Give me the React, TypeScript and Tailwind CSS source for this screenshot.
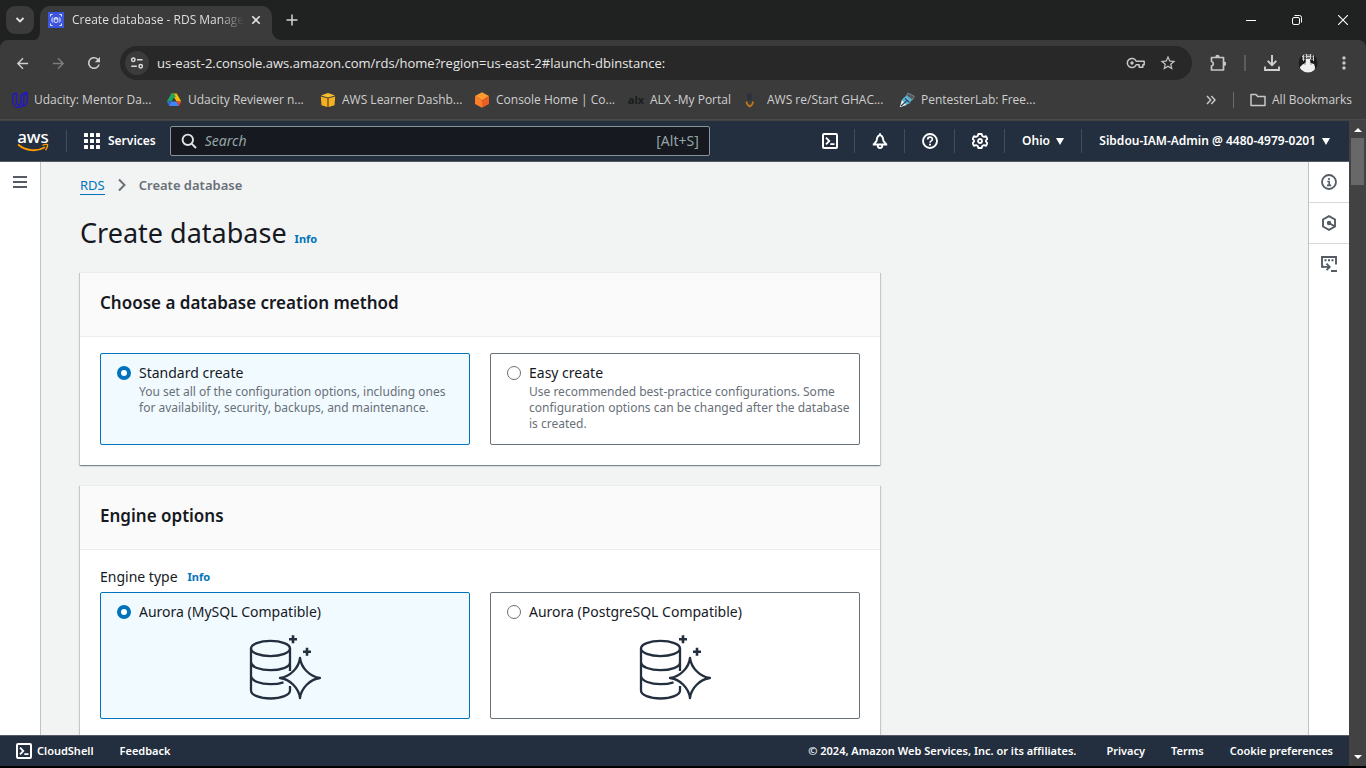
import React from "react";
import { MdArrowBack, MdArrowForward, MdRefresh, MdStarBorder, MdMoreVert } from "react-icons/md";

type IconProps = { className?: string };

function RdsFavicon() {
  return (
    <svg viewBox="0 0 16 16" className="size-4 shrink-0">
      <rect width="16" height="16" fill="#3b55dc" />
      <g fill="none" stroke="#fff" strokeWidth=".9">
        <ellipse cx="8" cy="6.300" rx="1.800" ry="0.7" />
        <path d="M6.200 6.300v3.400c0 .5.8.8 1.800.8s1.800-.3 1.800-.8V6.300M4.600 5.500C3.700 6.500 3.700 9.500 4.600 10.500M11.400 5.500C12.300 6.500 12.300 9.500 11.400 10.500" />
        <path d="M4.500 2.500h-2v2M11.500 2.500h2v2M4.500 13.500h-2v-2M11.500 13.500h2v-2" />
      </g>
    </svg>
  );
}

function TuneIcon() {
  return (
    <svg viewBox="0 0 16 16" className="size-4" fill="none" stroke="#dcdcdc" strokeWidth="1.500">
      <circle cx="4.300" cy="4.700" r="1.700" />
      <path d="M8 4.700h5.500M2.300 11.300h5.500" />
      <circle cx="11.700" cy="11.300" r="1.700" />
    </svg>
  );
}

function KeyIcon() {
  return (
    <svg viewBox="0 0 20 14" className="h-[14px] w-5" fill="none" stroke="#c7c7c7" strokeWidth="1.500">
      <path d="M10.200 5.300h8v3.400h-1.400v2.500h-3.600V8.700h-3A4.600 4.600 0 1 1 10.200 5.300z" strokeLinejoin="round" />
      <circle cx="6" cy="7" r="1.700" fill="#c7c7c7" stroke="none" />
    </svg>
  );
}

function PuzzleIcon() {
  return (
    <svg viewBox="0 0 18 18" className="size-[18px]">
      <path
        d="M2.500 3.500h12v12.500h-12v-4a2.300 2.300 0 0 0 0-4.500z"
        fill="none" stroke="#c7c7c7" strokeWidth="1.700" strokeLinejoin="round"
      />
      <path d="M6.300 3a2.200 2.200 0 0 1 4.400 0zM15 7.500a2.200 2.200 0 0 1 0 4.400z" fill="#c7c7c7" />
    </svg>
  );
}

function DownloadIcon() {
  return (
    <svg viewBox="0 0 18 18" className="size-[18px]" fill="none" stroke="#d0d0d0" strokeWidth="1.900">
      <path d="M9 1v10M4.700 6.900L9 11.200l4.300-4.300M2 12.500V16h14v-3.500" />
    </svg>
  );
}

function Avatar() {
  return (
    <svg viewBox="0 0 20 20" className="size-5">
      <clipPath id="avatar-clip"><circle cx="10" cy="10" r="9.500" /></clipPath>
      <g clipPath="url(#avatar-clip)">
        <rect width="20" height="20" fill="#1d1d1d" />
        <rect x="4" y="1" width="12" height="6" fill="#6f6f6f" />
        <path d="M5 1h1v7H5zM8 0h1v5H8zM12 1h1v5h-1zM15 2h1v6h-1zM4 3h12v1H4z" fill="#d0d0d0" />
        <path d="M6.500 2h1v4h-1zM13.500 2h1v4h-1z" fill="#151515" />
        <path d="M2 20v-6l2.500-2.500 3-1.500.5-4h4l.5 4 3.500 1 1 3-.5 6z" fill="#efefef" />
        <path d="M7 10v2M13 10v2" stroke="#999" fill="none" />
      </g>
    </svg>
  );
}

function UdacityIcon() {
  return (
    <svg viewBox="0 0 16 16" className="size-4 shrink-0" fill="none" stroke="#2117c9" strokeWidth="1.400" strokeLinejoin="round">
      <path d="M4.500.800L.800 2.700v6.500C.800 13 3.500 15.200 6.700 15.200s5-1.500 5-5V3L15.200 1v7.500c0 3-1.500 4.700-4 5.700" />
      <path d="M4.500.800v8.500c0 2 1 3.200 2.700 3.800M9 3v7.500c0 1.500-.8 2.200-1.800 2.600M9 3l3.500-2.200 2.700.2" />
    </svg>
  );
}

function DriveIcon() {
  return (
    <svg viewBox="0 0 16 16" className="size-4 shrink-0">
      <path d="M5.300 1.500h5.400L15.300 9.500H10.600L8 5.200z" fill="#fbbc04" />
      <path d="M5.300 1.500h2.700L10 5.200 8 5.200l-2.600 4.300H.8z" fill="#1fa463" />
      <path d="M.8 9.500h4.600L3.200 14z" fill="#2f6bd6" />
      <path d="M5.400 9.500h5.200L12.900 14H3.200z" fill="#4285f4" />
      <path d="M10.600 9.500h4.700L12.900 14z" fill="#ea4335" />
    </svg>
  );
}

function YellowBoxIcon() {
  return (
    <svg viewBox="0 0 16 16" className="size-4 shrink-0">
      <path d="M1 3.500L8 1l7 2.500L8 5.500z" fill="#fcbf2d" />
      <path d="M.8 4.500L7.200 6.300V15L1.500 13.200z" fill="#f5b021" />
      <path d="M15.200 4.500L8.800 6.300V15l5.700-1.800z" fill="#f5b021" />
      <path d="M7.200 6.300h1.600V15H7.200z" fill="#a87412" />
    </svg>
  );
}

function ConsoleBoxIcon() {
  return (
    <svg viewBox="0 0 16 16" className="size-4 shrink-0">
      <path d="M8 .3l7 3.700L8 8.500 1 4z" fill="#ff9a2e" />
      <path d="M1 4l7 4.500v7.200L1 12z" fill="#fb7f2a" />
      <path d="M15 4L8 8.500v7.200l7-3.700z" fill="#ee5d21" />
    </svg>
  );
}

function AlxIcon() {
  return <span className="flex h-4 w-4 shrink-0 items-center justify-center text-[11px] leading-4 font-bold text-[#171c1e]">alx</span>;
}

function RestartIcon() {
  return (
    <svg viewBox="0 0 16 16" className="size-4 shrink-0">
      <path d="M2 1l2 1.500L6.500 1v6L4.500 9 2 7z" fill="#2b303a" />
      <path d="M8 4l7-1-3 3.500H8z" fill="#343840" />
      <path d="M1.500 9.500C1.500 12 3 13.500 4.800 14.500 6.600 13.500 8 12 8 9.500" fill="none" stroke="#c07a17" strokeWidth="1.700" />
    </svg>
  );
}

function PentesterIcon() {
  return (
    <svg viewBox="0 0 16 16" className="size-4 shrink-0">
      <path d="M8 3l5.500 4-3 4.500-9 3.500L3.500 7z" fill="#5ab6dd" />
      <path d="M9 1l6.300 3.300-2 3.700L7.500 3.500z" fill="#4b5961" stroke="#8a969c" strokeWidth=".8" />
      <path d="M.8 15.200L2.800 8l4.700 5z" fill="#e8eef0" />
      <path d="M6 6.500l4.500 4M2 14l5.500-5" stroke="#2d3f4a" strokeWidth="1.100" />
    </svg>
  );
}

function SearchIcon() {
  return (
    <svg viewBox="0 0 16 16" className="size-4 shrink-0" fill="none" stroke="#e2e5e5" strokeWidth="1.900">
      <circle cx="6.800" cy="6.800" r="5.200" />
      <path d="M10.600 10.600l4.400 4.400" />
    </svg>
  );
}

function ShellIcon() {
  return (
    <svg viewBox="0 0 16 16" className="size-4 shrink-0" fill="none" stroke="#fff" strokeWidth="2">
      <rect x="1" y="1" width="14" height="14" rx="1" />
      <path d="M4 4.600L7.300 8 4 11.400M8.300 11.200H12.500" strokeWidth="1.800" />
    </svg>
  );
}

function BellIcon() {
  return (
    <svg viewBox="0 0 16 16" className="size-4" fill="none" stroke="#fff" strokeWidth="1.900" strokeLinejoin="round">
      <path d="M.8 11.500h14.400M1.800 11.300L4.600 7.800C5 4.500 5.500 2.300 8 2.300s3 2.200 3.400 5.500l2.800 3.500" />
      <path d="M8 .3v2" />
      <path d="M5.800 12v.8a2.200 2.200 0 0 0 4.400 0V12" />
    </svg>
  );
}

function HelpIcon() {
  return (
    <svg viewBox="0 0 16 16" className="size-4" fill="none" stroke="#fff" strokeWidth="1.900">
      <circle cx="8" cy="8" r="7" />
      <path d="M5.700 6.500C5.700 3.300 10.400 3.400 10.400 6.200 10.400 8 8 7.800 8 9.700" strokeWidth="1.700" />
      <path d="M8 10.700v1.900" />
    </svg>
  );
}

function GearIcon() {
  return (
    <svg viewBox="0 0 16 16" className="size-4" fill="none" stroke="#fff" strokeWidth="1.800" strokeLinejoin="round">
      <path d="M6.300 1h3.400l.5 2 1.800.9 2-.7 1.400 2.700L14 7.300v1.400l1.400 1.400-1.400 2.700-2-.7-1.800.9-.5 2H6.300l-.5-2L4 12.100l-2 .7L.6 10.100 2 8.700V7.300L.6 5.900 2 3.200l2 .7L5.800 3z" />
      <circle cx="8" cy="8" r="2" />
    </svg>
  );
}

function InfoIcon() {
  return (
    <svg viewBox="0 0 16 16" className="size-4" fill="none" stroke="#545b64" strokeWidth="1.800">
      <circle cx="8" cy="8" r="7" />
      <path d="M8 4v2M6.300 7.500H8.200V12M6 11.400h4.200" strokeWidth="1.600" />
    </svg>
  );
}

function HexIcon() {
  return (
    <svg viewBox="0 0 16 16" className="size-4" fill="none" stroke="#545b64" strokeWidth="1.900">
      <path d="M8 1.100l6 3.400v7l-6 3.400-6-3.400v-7z" />
      <circle cx="8" cy="8" r="2.200" fill="#545b64" stroke="none" />
      <path d="M8 8l5.500 3.200" />
    </svg>
  );
}

function TerminalIcon() {
  return (
    <svg viewBox="0 0 16 16" className="size-4" fill="none" stroke="#545b64" strokeWidth="1.900">
      <path d="M3 10.800H1V1h14v7.500M10 15h6" />
      <path d="M3.500 4.200h2M7 4.200h2M10.500 4.200h2" strokeWidth="2" />
      <path d="M1.500 10.900h6.500M5.500 7.600l3.200 3.300-3.200 3.300" />
    </svg>
  );
}

function DatabaseStarIcon({ className }: IconProps) {
  return (
    <svg viewBox="0 0 72 65" className={className} fill="none" stroke="#232f3e" strokeWidth="2.300" strokeLinejoin="round">
      <ellipse cx="21.500" cy="13.500" rx="19.500" ry="7.600" />
      <path d="M2 13.500V55.500C2 60 10.500 63.500 21.500 63.500S41 60 41 55.500V51M41 13.500V36" />
      <path d="M2 27.500C2.500 32 11 35.200 21.500 35.200S40.500 32 41 28" />
      <path d="M2 41.500C3 46 11 49.200 21.500 49.200C26 49.200 31 48.500 34.500 47.300" />
      <path d="M51 23C52.200 33 61 41.800 71 43C61 44.200 52.200 53 51 63C49.800 53 41 44.200 31 43C41 41.800 49.800 33 51 23Z" />
      <path d="M44 .2v8M40 4.200h8M58 12.800v8M54 16.800h8" strokeWidth="2.600" />
    </svg>
  );
}

function CaretDown() {
  return (
    <svg viewBox="0 0 8 7" className="h-[7px] w-2 shrink-0">
      <path d="M0 0h8L4 7z" fill="#fff" />
    </svg>
  );
}

const bookmarks: { label: string; icon: React.ReactNode; width: string }[] = [
  { label: "Udacity: Mentor Da...", icon: <UdacityIcon />, width: "w-[154px]" },
  { label: "Udacity Reviewer n...", icon: <DriveIcon />, width: "w-[154px]" },
  { label: "AWS Learner Dashb...", icon: <YellowBoxIcon />, width: "w-[154px]" },
  { label: "Console Home | Co...", icon: <ConsoleBoxIcon />, width: "w-[154px]" },
  { label: "ALX -My Portal", icon: <AlxIcon />, width: "w-[117px]" },
  { label: "AWS re/Start GHAC...", icon: <RestartIcon />, width: "w-[154px]" },
  { label: "PentesterLab: Free...", icon: <PentesterIcon />, width: "w-[154px]" },
];

function TabStrip() {
  return (
    <div className="flex h-10 items-end bg-[#1f2221] text-[#dedede]">
      <button aria-label="Search tabs" className="mb-1.5 ml-1.5 flex size-7 items-center justify-center rounded-[9px] bg-[#3b3b3b]">
        <svg viewBox="0 0 10 10" className="size-[10px]" fill="none" stroke="#e3e3e3" strokeWidth="1.800"><path d="M1.500 3L5 6.500 8.500 3" /></svg>
      </button>
      <svg viewBox="0 0 6 10" className="h-[10px] w-1.5"><path d="M6 0V10H0C4 10 6 6 6 0z" fill="#3b3b3b" /></svg>
      <div className="flex h-[34px] w-[232px] items-center rounded-t-[10px] bg-[#3b3b3b] px-2 pb-1.5">
        <RdsFavicon />
        <span className="ml-2 flex-1 overflow-hidden mask-r-from-85% mask-r-to-100% text-xs leading-4 whitespace-nowrap">Create database - RDS Manage</span>
        <button aria-label="Close tab" className="ml-1 flex size-4 items-center justify-center">
          <svg viewBox="0 0 10 10" className="size-[10px]" stroke="#e3e3e3" strokeWidth="1.600"><path d="M1.300 1.300l7.400 7.400M8.700 1.300L1.300 8.700" /></svg>
        </button>
      </div>
      <svg viewBox="0 0 10 10" className="size-[10px]"><path d="M0 0V10H10C4 10 0 6 0 0z" fill="#3b3b3b" /></svg>
      <button aria-label="New tab" className="mb-1.5 flex h-7 w-5 items-center justify-center">
        <svg viewBox="0 0 12 12" className="size-3" stroke="#d5d5d5" strokeWidth="1.500"><path d="M6 .5v11M.5 6h11" /></svg>
      </button>
      <div className="ml-auto flex h-10">
        <button aria-label="Minimize" className="flex w-[46px] items-center justify-center">
          <svg viewBox="0 0 10 10" className="size-[10px]" stroke="#fff"><path d="M0 5.500h10" /></svg>
        </button>
        <button aria-label="Restore" className="flex w-[46px] items-center justify-center">
          <svg viewBox="0 0 10 10" className="size-[10px]" fill="none" stroke="#fff"><rect x=".5" y="2.500" width="7" height="7" rx="1.500" /><path d="M2.500.5h5a2 2 0 0 1 2 2v5" /></svg>
        </button>
        <button aria-label="Close" className="flex w-[46px] items-center justify-center">
          <svg viewBox="0 0 10 10" className="size-[10px]" stroke="#fff" strokeWidth="1.100"><path d="M0 0l10 10M10 0L0 10" /></svg>
        </button>
      </div>
    </div>
  );
}

function Toolbar() {
  return (
    <div className="bg-[#1f2221]">
      <div className="rounded-t-lg bg-[#3b3b3b]">
        <div className="flex h-[46px] items-center px-1">
          <button aria-label="Back" className="flex w-9 justify-center text-[#d0d0d0]"><MdArrowBack size={17} /></button>
          <button aria-label="Forward" className="flex w-9 justify-center text-[#7d7d7d]"><MdArrowForward size={17} /></button>
          <button aria-label="Reload" className="flex w-9 justify-center text-[#d0d0d0]"><MdRefresh size={18} /></button>
          <div className="ml-2 flex h-[34px] flex-1 items-center rounded-full bg-[#282828] pr-[15px] pl-[5px]">
            <button aria-label="Site information" className="flex size-6 items-center justify-center rounded-full bg-[#3b3b3b]"><TuneIcon /></button>
            <input
              aria-label="Address"
              defaultValue="us-east-2.console.aws.amazon.com/rds/home?region=us-east-2#launch-dbinstance:"
              className="ml-2 min-w-0 flex-1 bg-transparent text-[13px] leading-5 text-[#e6e6e6] outline-none"
            />
            <button aria-label="Passwords" className="mr-[13px]"><KeyIcon /></button>
            <button aria-label="Bookmark this page" className="text-[#c7c7c7]"><MdStarBorder size={18} /></button>
          </div>
          <button aria-label="Extensions" className="ml-2 flex w-9 justify-center"><PuzzleIcon /></button>
          <span className="mx-2 h-4 w-0.5 bg-[#5c5c5c]" />
          <button aria-label="Downloads" className="flex w-9 justify-center"><DownloadIcon /></button>
          <button aria-label="Profile" className="flex w-9 justify-center"><Avatar /></button>
          <button aria-label="Menu" className="flex w-9 justify-center text-[#c7c7c7]"><MdMoreVert size={20} /></button>
        </div>
        <nav aria-label="Bookmarks" className="flex h-[34px] items-start border-b border-[#4a4a48] pt-1.5 pr-[14px] pl-3 text-xs leading-4 text-[#cfcfcf]">
          {bookmarks.map((b) => (
            <a key={b.label} href="#" className={`flex shrink-0 items-center gap-1.5 whitespace-nowrap ${b.width}`}>
              {b.icon}
              <span>{b.label}</span>
            </a>
          ))}
          <button aria-label="More bookmarks" className="ml-auto flex h-4 items-center">
            <svg viewBox="0 0 10 10" className="size-[10px]" fill="none" stroke="#c7c7c7" strokeWidth="1.500"><path d="M1 1l3.700 4L1 9M5.300 1L9 5 5.300 9" /></svg>
          </button>
          <span className="mr-4 ml-[17px] h-4 w-px bg-[#6a6a6a]" />
          <a href="#" className="flex items-center gap-1.5">
            <svg viewBox="0 0 16 14" className="h-[14px] w-4" fill="none" stroke="#c7c7c7" strokeWidth="1.500" strokeLinejoin="round"><path d="M1 1.500h5l1.700 2H15v9H1z" /></svg>
            All Bookmarks
          </a>
        </nav>
      </div>
    </div>
  );
}

function AwsHeader() {
  return (
    <header className="flex h-[41px] items-center border-b border-[#545b64] bg-[#232f3e] text-xs leading-4 font-semibold text-white">
      <a href="#" aria-label="AWS home" className="ml-4 flex w-[34px] flex-col items-center">
        <span className="text-[17px] leading-[13px] font-medium">aws</span>
        <svg viewBox="0 0 32 9" className="h-[9px] w-8" fill="none" stroke="#ff9900">
          <path d="M1 1.500C9 8.200 20 8.800 28 4.200" strokeWidth="1.900" />
          <path d="M25.500 2.300C28 1.300 31 1 30.600 2.200 30.400 4 30 5.500 28.500 7.300" strokeWidth="1.400" />
        </svg>
      </a>
      <span className="ml-4 h-[22px] w-px bg-[#414d5c]" />
      <button className="ml-[17px] flex items-center gap-2">
        <svg viewBox="0 0 16 16" className="size-4" fill="#fff">
          {[0, 6, 12].map((y) => [0, 6, 12].map((x) => <rect key={`${x}-${y}`} x={x} y={y} width="4" height="4" rx=".5" />))}
        </svg>
        Services
      </button>
      <label className="ml-[14px] flex h-[30px] w-[540px] items-center rounded-xs border border-[#879596] bg-[#16191f] px-[10px]">
        <SearchIcon />
        <input type="search" aria-label="Search" placeholder="Search" className="ml-2 min-w-0 flex-1 bg-transparent text-sm leading-5 font-normal italic outline-none placeholder:text-[#95a5a6]" />
        <span className="text-sm font-normal text-[#95a5a6]">[Alt+S]</span>
      </label>
      <div className="ml-auto flex items-center">
        <button aria-label="CloudShell" className="flex h-6 w-[50px] items-center justify-center border-r border-[#414d5c]"><ShellIcon /></button>
        <button aria-label="Notifications" className="flex h-6 w-[50px] items-center justify-center border-r border-[#414d5c]"><BellIcon /></button>
        <button aria-label="Help" className="flex h-6 w-[50px] items-center justify-center border-r border-[#414d5c]"><HelpIcon /></button>
        <button aria-label="Settings" className="flex h-6 w-[50px] items-center justify-center border-r border-[#414d5c]"><GearIcon /></button>
        <button className="flex h-6 w-[77px] items-center justify-center gap-1.5 border-r border-[#414d5c]">Ohio <CaretDown /></button>
        <button className="flex h-6 w-[267px] items-center justify-end gap-1.5 pr-[19px] whitespace-nowrap">Sibdou-IAM-Admin @ 4480-4979-0201 <CaretDown /></button>
      </div>
    </header>
  );
}

type TileProps = { name: string; id: string; label: string; checked?: boolean; description?: string; children?: React.ReactNode };

function Tile({ name, id, label, checked, description, children }: TileProps) {
  return (
    <label
      htmlFor={id}
      className="flex flex-col rounded-xs border border-[#687078] bg-white pt-2 pr-2 pb-3 pl-4 has-checked:border-[#0073bb] has-checked:bg-[#f1faff]"
    >
      <span className="flex items-center gap-2 text-sm leading-[22px] text-[#16191f]">
        <input
          type="radio" id={id} name={name} defaultChecked={checked}
          className="size-[14px] shrink-0 appearance-none rounded-full border border-[#687078] bg-white checked:border-4 checked:border-[#0073bb]"
        />
        {label}
      </span>
      {description && <span className="pl-[22px] text-xs leading-4 text-[#687078]">{description}</span>}
      {children && <span className="flex justify-center pt-3 pr-2 pb-1.5">{children}</span>}
    </label>
  );
}

function Panel({ title, children }: { title: string; children: React.ReactNode }) {
  return (
    <section className="border-t border-[#eaeded] bg-white shadow-[0_1px_1px_0_rgba(0,28,36,0.3),1px_1px_1px_0_rgba(0,28,36,0.15),-1px_1px_1px_0_rgba(0,28,36,0.15)]">
      <h2 className="border-b border-[#eaeded] bg-[#fafafa] px-5 pt-[19px] pb-[22px] text-[17px] leading-[22px] font-semibold text-[#16191f]">{title}</h2>
      <div className="px-5 pt-4 pb-5">{children}</div>
    </section>
  );
}

function MainContent() {
  return (
    <main className="min-w-0 flex-1 overflow-hidden bg-[#f2f3f3] pl-[39px] text-[#16191f]">
      <nav aria-label="Breadcrumb" className="flex items-center pt-3 text-[13px] leading-[22px]">
        <a href="#" className="border-b border-[#0073bb] leading-[18px] text-[#0073bb]">RDS</a>
        <svg viewBox="0 0 8 14" className="mx-[13px] h-[14px] w-2" fill="none" stroke="#687078" strokeWidth="2"><path d="M1 1.500L6.500 7 1 12.500" /></svg>
        <span className="font-semibold text-[#687078]">Create database</span>
      </nav>
      <div className="mt-[19px] flex items-baseline gap-2">
        <h1 className="text-[27px] leading-9">Create database</h1>
        <a href="#" className="text-[11px] font-bold text-[#0073bb]">Info</a>
      </div>
      <div className="mt-[21px] flex max-w-[800px] flex-col gap-5">
        <Panel title="Choose a database creation method">
          <div className="grid grid-cols-2 gap-5">
            <Tile name="method" id="standard" label="Standard create" checked description="You set all of the configuration options, including ones for availability, security, backups, and maintenance." />
            <Tile name="method" id="easy" label="Easy create" description="Use recommended best-practice configurations. Some configuration options can be changed after the database is created." />
          </div>
        </Panel>
        <Panel title="Engine options">
          <div className="mb-1 flex items-center gap-[10px] text-sm leading-[22px]">
            Engine type
            <a href="#" className="text-[11px] font-bold text-[#0073bb]">Info</a>
          </div>
          <div className="grid grid-cols-2 gap-5">
            <Tile name="engine" id="aurora-mysql" label="Aurora (MySQL Compatible)" checked>
              <DatabaseStarIcon className="h-[65px] w-[72px]" />
            </Tile>
            <Tile name="engine" id="aurora-postgres" label="Aurora (PostgreSQL Compatible)">
              <DatabaseStarIcon className="h-[65px] w-[72px]" />
            </Tile>
          </div>
        </Panel>
      </div>
    </main>
  );
}

function PageFooter() {
  return (
    <footer className="flex h-[31px] shrink-0 items-center border-t border-[#545b64] bg-[#232f3e] px-4 text-[11px] leading-4 font-semibold text-white">
      <button className="flex items-center gap-[5px]"><ShellIcon /> CloudShell</button>
      <a href="#" className="ml-[26px]">Feedback</a>
      <span className="ml-auto">© 2024, Amazon Web Services, Inc. or its affiliates.</span>
      <a href="#" className="ml-[30px]">Privacy</a>
      <a href="#" className="ml-[26px]">Terms</a>
      <a href="#" className="ml-[26px]">Cookie preferences</a>
    </footer>
  );
}

export default function App() {
  return (
    <div className="flex h-screen flex-col overflow-hidden border-b-2 border-black bg-white font-['Noto_Sans',sans-serif]">
      <div className="shrink-0 font-['Open_Sans','Noto_Sans',sans-serif]">
        <TabStrip />
        <Toolbar />
      </div>
      <div className="flex min-h-0 flex-1 bg-[#424242] pt-px">
        <div className="flex min-w-0 flex-1 flex-col">
          <AwsHeader />
          <div className="flex min-h-0 flex-1">
            <aside className="w-[41px] shrink-0 border-r border-[#bcc4c4] bg-white">
              <button aria-label="Open navigation" className="flex h-10 w-10 items-center justify-center">
                <svg viewBox="0 0 14 12" className="h-3 w-[14px]" stroke="#545b64" strokeWidth="2"><path d="M0 1h14M0 6h14M0 11h14" /></svg>
              </button>
            </aside>
            <MainContent />
            <aside className="w-[41px] shrink-0 border-l border-[#bcc4c4] bg-white">
              <button aria-label="Info panel" className="flex h-[41px] w-10 items-center justify-center border-b border-[#d5dbdb]"><InfoIcon /></button>
              <button aria-label="Diagnostics" className="flex h-[41px] w-10 items-center justify-center border-b border-[#d5dbdb]"><HexIcon /></button>
              <button aria-label="Tutorials" className="flex h-10 w-10 items-center justify-center"><TerminalIcon /></button>
            </aside>
          </div>
          <PageFooter />
        </div>
        <div className="flex w-[17px] shrink-0 flex-col items-center">
          <svg viewBox="0 0 8 4" className="mt-[7px] h-1 w-2"><path d="M4 0l4 4H0z" fill="#fff" /></svg>
          <span className="mt-1.5 h-[47px] w-[13px] bg-[#686868]" />
          <svg viewBox="0 0 8 4" className="mt-auto mb-[7px] h-1 w-2"><path d="M0 0h8L4 4z" fill="#fff" /></svg>
        </div>
      </div>
    </div>
  );
}
